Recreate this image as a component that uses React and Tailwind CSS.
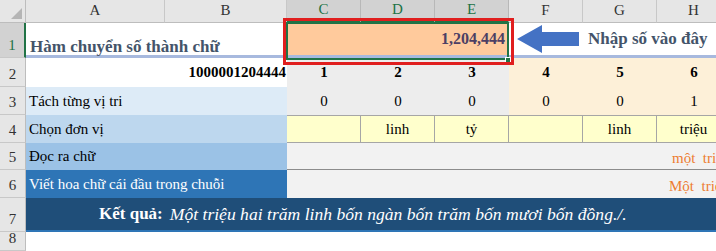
import React from "react";

function ColHead({ label, sel }) {
  return (
    <div
      className={
        "flex items-end justify-center pb-[1px] text-[15px] border-r " +
        (sel
          ? "bg-[#d2d2d2] text-[#217346] border-[#b8b8b8] border-b-2 border-b-[#217346]"
          : "bg-[#e6e6e6] text-[#333] border-[#c8c8c8] border-b border-b-[#bdbdbd]")
      }
    >
      {label}
    </div>
  );
}

function RowHead({ n, sel }) {
  return (
    <div
      className={
        "flex items-end justify-center pb-[1px] text-[15px] border-b border-[#c8c8c8] " +
        (sel
          ? "bg-[#d2d2d2] text-[#217346] border-r-2 border-r-[#217346]"
          : "bg-[#e6e6e6] text-[#333] border-r border-r-[#bdbdbd]")
      }
    >
      {n}
    </div>
  );
}

export default function App() {
  return (
    <div className="w-[716px] h-[251px] overflow-hidden bg-white relative font-['Liberation_Serif']">
      <div className="grid grid-cols-[26px_139px_122px_74px_74px_74px_74px_74px_74px] grid-rows-[23px_35px_29px_28px_28px_27px_28px_34px_19px] w-[730px]">
        {/* header row */}
        <div className="bg-[#e6e6e6] border-r border-b border-[#bdbdbd] relative">
          <div className="absolute right-[3px] bottom-[3px] w-0 h-0 border-l-[11px] border-l-transparent border-b-[11px] border-b-[#b5b5b5]" />
        </div>
        <ColHead label="A" />
        <ColHead label="B" />
        <ColHead label="C" sel />
        <ColHead label="D" sel />
        <ColHead label="E" sel />
        <ColHead label="F" />
        <ColHead label="G" />
        <ColHead label="H" />

        {/* row 1 */}
        <RowHead n="1" sel />
        <div className="col-span-2 flex items-end pl-[4px] pb-[1px] leading-[14px] border-b-[3px] border-[#a7b9de] text-[#44546a] font-bold text-[17px] whitespace-nowrap">
          Hàm chuyển số thành chữ
        </div>
        <div className="col-span-3 bg-[#ffca9c] flex items-center justify-end pr-[4px] text-[#4d3f64] font-bold text-[16px] border-b-[3px] border-[#a7b9de]">
          1,204,444
        </div>
        <div className="col-span-3 flex items-center border-b-[3px] border-[#a7b9de] pl-[8px]">
          <svg width="62" height="28" viewBox="0 0 62 28" className="shrink-0">
            <polygon points="0,14 25,0 25,7 62,7 62,21 25,21 25,28" fill="#4472c4" />
          </svg>
          <span className="ml-[9px] text-[#44546a] font-bold text-[17px] whitespace-nowrap">Nhập số vào đây</span>
        </div>

        {/* row 2 */}
        <RowHead n="2" />
        <div />
        <div className="flex items-end justify-end pb-[4px] pr-[1px] font-bold text-[15px] text-black">1000001204444</div>
        {["1", "2", "3"].map((t) => (
          <div key={t} className="bg-[#ededed] flex items-end justify-center pb-[4px] font-bold text-[15px]">{t}</div>
        ))}
        {["4", "5", "6"].map((t) => (
          <div key={t} className="bg-[#fdf0d8] flex items-end justify-center pb-[4px] font-bold text-[15px]">{t}</div>
        ))}

        {/* row 3 */}
        <RowHead n="3" />
        <div className="col-span-2 bg-[#ddebf7] flex items-center pl-[3px] text-[15px]">Tách từng vị tri</div>
        {["0", "0", "0"].map((t, i) => (
          <div key={i} className="bg-[#ededed] flex items-center justify-center text-[15px]">{t}</div>
        ))}
        {["0", "0", "1"].map((t, i) => (
          <div key={i} className="bg-[#fdf0d8] flex items-center justify-center text-[15px]">{t}</div>
        ))}

        {/* row 4 */}
        <RowHead n="4" />
        <div className="col-span-2 bg-[#bdd7ee] flex items-center pl-[3px] text-[15px]">Chọn đơn vị</div>
        {["", "linh", "tỷ", "", "linh", "triệu"].map((t, i) => (
          <div key={i} className="bg-[#ffffcc] flex items-center justify-center text-[15px] border-t border-b border-r border-[#a6a6a6]">{t}</div>
        ))}

        {/* row 5 */}
        <RowHead n="5" />
        <div className="col-span-2 bg-[#9bc2e6] flex items-center pl-[3px] text-[15px]">Đọc ra chữ</div>
        <div className="col-span-6 bg-[#f2f2f2] border-b border-[#8c8c8c] relative overflow-hidden">
          <span className="absolute left-[385px] top-[4px] text-[#ed7d31] text-[15px] whitespace-nowrap">một&nbsp; triệ</span>
        </div>

        {/* row 6 */}
        <RowHead n="6" />
        <div className="col-span-2 bg-[#2e75b6] flex items-center pl-[3px] text-[15px] text-white whitespace-nowrap">Viết hoa chữ cái đầu trong chuỗi</div>
        <div className="col-span-6 bg-[#f2f2f2] relative overflow-hidden">
          <span className="absolute left-[382px] top-[5px] text-[#ed7d31] text-[15px] whitespace-nowrap">Một&nbsp; triệ</span>
        </div>

        {/* row 7 */}
        <RowHead n="7" />
        <div className="col-span-8 bg-[#1f4e79] border-b-2 border-[#2e75b6] flex items-center pl-[73px] text-white text-[17px] whitespace-nowrap">
          <span className="font-bold">Kết quả:</span>
          <span className="italic ml-[7px] text-[17.6px]">Một triệu hai trăm linh bốn ngàn bốn trăm bốn mươi bốn đồng./.</span>
        </div>

        {/* row 8 */}
        <RowHead n="8" />
        <div className="col-span-8" />
      </div>

      {/* selection + red highlight box */}
      <div className="absolute left-[286px] top-[22px] w-[223px] h-[38px] border-2 border-[#217346] pointer-events-none" />
      <div className="absolute left-[505px] top-[57px] w-[6px] h-[6px] bg-[#217346] border border-white" />
      <div className="absolute left-[283px] top-[18px] w-[231px] h-[47px] border-[3px] border-[#e01e1e] pointer-events-none" />
    </div>
  );
}
